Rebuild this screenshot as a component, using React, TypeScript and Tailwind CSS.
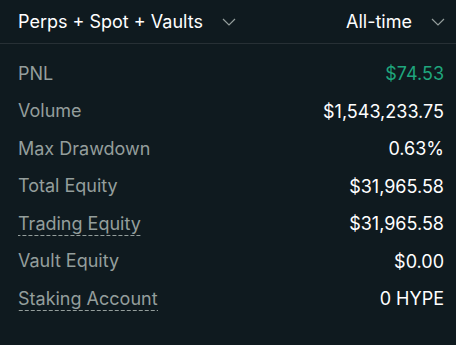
import React from 'react'

interface Row {
  label: string
  value: string
  dashed?: boolean
  green?: boolean
}

const rows: Row[] = [
  { label: 'PNL', value: '$74.53', green: true },
  { label: 'Volume', value: '$1,543,233.75' },
  { label: 'Max Drawdown', value: '0.63%' },
  { label: 'Total Equity', value: '$31,965.58' },
  { label: 'Trading Equity', value: '$31,965.58', dashed: true },
  { label: 'Vault Equity', value: '$0.00' },
  { label: 'Staking Account', value: '0 HYPE', dashed: true },
]

function Chevron() {
  return (
    <svg width="14" height="8" viewBox="0 0 14 8" fill="none" className="shrink-0">
      <path d="M1 1l6 6 6-6" stroke="#949e9c" strokeWidth="1.2" />
    </svg>
  )
}

export default function App() {
  return (
    <div
      className="w-[456px] h-[345px] bg-[#0f1a1f] text-white overflow-hidden"
      style={{ fontFamily: 'Inter, sans-serif' }}
    >
      <div className="h-[44px] flex items-center justify-between pl-[18px] pr-[11px] border-b border-[#273035]">
        <div className="flex items-center gap-[19px] text-[18px]">
          <span>Perps + Spot + Vaults</span>
          <Chevron />
        </div>
        <div className="flex items-center gap-[19px] text-[18px]">
          <span>All-time</span>
          <Chevron />
        </div>
      </div>

      <div className="flex flex-col pt-[11px] pl-[18px] pr-[12px]">
        {rows.map((row) => (
          <div key={row.label} className="h-[37.5px] flex items-center justify-between text-[18px]">
            {row.dashed ? (
              <span className="text-[#949e9c] leading-[22px] pt-[2px] pb-[1px] bg-[linear-gradient(to_right,#949e9c_4px,transparent_4px)] bg-[length:6px_1px] bg-repeat-x bg-bottom">
                {row.label}
              </span>
            ) : (
              <span className="text-[#949e9c] leading-[22px]">{row.label}</span>
            )}
            <span className={row.green ? 'text-[#1fa67d]' : 'text-white'}>{row.value}</span>
          </div>
        ))}
      </div>
    </div>
  )
}
